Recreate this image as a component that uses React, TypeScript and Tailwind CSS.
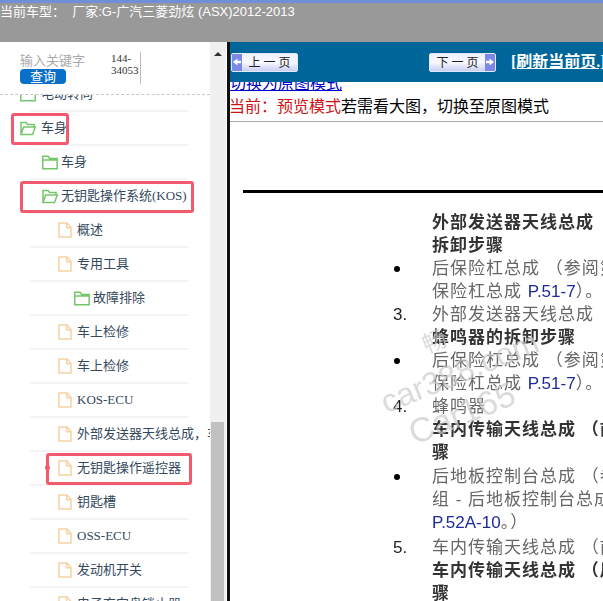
const cjk = "font-['Liberation_Sans','Noto_Sans_CJK_SC',sans-serif]";
const treeFont = "font-['Liberation_Serif','Noto_Sans_CJK_SC',serif]";

function FolderIcon({ open }: { open?: boolean }) {
  return (
    <svg width="16" height="15" viewBox="0 0 16 15" fill="none" stroke="#74c66c" strokeWidth="1.5" className="shrink-0">
      {open ? (
        <path d="M1 13.5V1.5h5l1.5 2H14v2.5M1 13.5h11.5L15.3 6H3.6L1 13.5z" />
      ) : (
        <path d="M.8 13.8V1.3h5.4l1.4 2.2h7.6v10.3H.8zM.8 5h14.4" />
      )}
    </svg>
  );
}

function FileIcon() {
  return (
    <svg width="14" height="16" viewBox="0 0 14 16" fill="none" stroke="#f5d2a4" strokeWidth="1.5" className="shrink-0">
      <path d="M1 1h8l4 4.5V15H1V1zM8.6 1v4.8H13" />
    </svg>
  );
}

type Node = {
  label: string;
  indent: string;
  gap: string;
  folder?: boolean;
  open?: boolean;
  mark?: string;
  dot?: boolean;
};

const nodes: Node[] = [
  { label: "电动转向", indent: "pl-[20px]", gap: "gap-[5px]", folder: true },
  { label: "车身", indent: "pl-[20px]", gap: "gap-[5px]", folder: true, open: true, mark: "left-[-19px] w-[58px]" },
  { label: "车身", indent: "pl-[42px]", gap: "gap-[3px]", folder: true },
  { label: "无钥匙操作系统(KOS)", indent: "pl-[42px]", gap: "gap-[3px]", folder: true, open: true, mark: "left-[-10px] w-[174px]" },
  { label: "概述", indent: "pl-[58px]", gap: "gap-[5px]" },
  { label: "专用工具", indent: "pl-[58px]", gap: "gap-[5px]" },
  { label: "故障排除", indent: "pl-[74px]", gap: "gap-[3px]", folder: true },
  { label: "车上检修", indent: "pl-[58px]", gap: "gap-[5px]" },
  { label: "车上检修", indent: "pl-[58px]", gap: "gap-[5px]" },
  { label: "KOS-ECU", indent: "pl-[58px]", gap: "gap-[5px]" },
  { label: "外部发送器天线总成，车内传输天线总成", indent: "pl-[58px]", gap: "gap-[5px]" },
  { label: "无钥匙操作遥控器", indent: "pl-[58px]", gap: "gap-[5px]", mark: "left-[16px] w-[146px]", dot: true },
  { label: "钥匙槽", indent: "pl-[58px]", gap: "gap-[5px]" },
  { label: "OSS-ECU", indent: "pl-[58px]", gap: "gap-[5px]" },
  { label: "发动机开关", indent: "pl-[58px]", gap: "gap-[5px]" },
  { label: "电子方向盘锁止器", indent: "pl-[58px]", gap: "gap-[5px]" },
];

function TreeRow({ node }: { node: Node }) {
  return (
    <li className="relative ml-[30px] h-[34px] w-[158px] border-b-2 border-[#f4f4f4]">
      <div className={`-ml-[30px] flex h-[32px] w-[210px] items-center overflow-hidden ${node.indent} ${node.gap}`}>
        {node.folder ? <FolderIcon open={node.open} /> : <FileIcon />}
        <span className={`whitespace-nowrap text-[13px] text-[#34495e] ${treeFont}`}>{node.label}</span>
      </div>
      {node.mark && (
        <div className={`absolute top-[1px] h-[32px] rounded-[3px] border-[3px] border-[#f25a6e] ${node.mark}`}>
          {node.dot && <span className="absolute left-[-4px] top-[9px] h-[5px] w-[5px] rounded-full bg-[#f25a6e]" />}
        </div>
      )}
    </li>
  );
}

function Sidebar() {
  return (
    <aside className="flex h-full w-[230px] shrink-0 border-r-[3px] border-[#111]">
      <div className="flex w-[210px] shrink-0 flex-col bg-white">
        <div className="flex h-[53px] shrink-0 border-b border-dashed border-[#c8c8c8] pl-[20px] pt-[10px]">
          <div className="w-[46px] shrink-0">
            <div className={`whitespace-nowrap text-[13px] leading-[17px] text-[#aaa] ${cjk}`}>输入关键字</div>
            <div className={`flex h-[15px] w-[46px] items-center justify-center rounded-[4px] bg-[#0a6fc9] text-[13px] text-white ${cjk}`}>
              查询
            </div>
          </div>
          <div className="ml-[45px] h-[32px] w-[30px] border-r border-[#bbb] font-['Liberation_Serif',serif] text-[11px] leading-[12px] text-[#333]">
            144-
            <br />
            34053
          </div>
        </div>
        <div className="min-h-0 flex-1 overflow-hidden">
          <ul className="-mt-[17px]">
            {nodes.map((node, i) => (
              <TreeRow key={i} node={node} />
            ))}
          </ul>
        </div>
      </div>
      <div className="flex w-[16px] flex-col bg-[#f0f0f0]">
        <div className="flex h-[16px] shrink-0 items-center justify-center">
          <span className="mt-[8px] h-0 w-0 border-x-[4px] border-b-[4px] border-x-transparent border-b-[#333]" />
        </div>
        <div className="ml-[1px] mr-[2px] mt-[364px] flex-1 bg-[#c1c1c1]" />
      </div>
    </aside>
  );
}

function PageButton({ label, next }: { label: string; next?: boolean }) {
  const arrow = (
    <span className="flex h-full w-[10px] shrink-0 items-center justify-center bg-[#7a88e6]">
      <svg width="8" height="8" viewBox="0 0 8 8" fill="#fff" className={next ? "" : "rotate-180"}>
        <path d="M0 2.8h3.6V.5L8 4 3.6 7.5V5.2H0z" />
      </svg>
    </span>
  );
  return (
    <button className="flex h-[19px] w-[67px] shrink-0 items-center overflow-hidden rounded-[2px] border border-[#e4e8fb] bg-gradient-to-b from-[#eef0ff] via-[#f8f8ff] to-[#c9cff3] text-[12px] tracking-[3px] text-[#222]">
      {!next && arrow}
      <span className="flex-1 pl-[3px] text-center font-['Noto_Sans_CJK_SC',sans-serif]">{label}</span>
      {next && arrow}
    </button>
  );
}

function Step({ no, dot, children, className = "" }: { no?: string; dot?: boolean; children: React.ReactNode; className?: string }) {
  return (
    <div className={`flex h-[23px] items-center whitespace-nowrap ${className}`}>
      <div className="w-[40px] shrink-0 pl-[1px] font-['Liberation_Sans',sans-serif] text-[17px] text-[#222]">
        {no}
        {dot && <span className="ml-[1px] block h-[6px] w-[6px] rounded-full bg-black" />}
      </div>
      {children}
    </div>
  );
}

const body = "font-['Liberation_Sans','Noto_Sans_CJK_SC',sans-serif] text-[17px] tracking-[1px] text-[#666]";
const heading = "font-['Liberation_Sans','Noto_Sans_CJK_SC',sans-serif] text-[17px] tracking-[1px] font-bold text-[#333]";
const ref = "tracking-normal text-[#1c2a9a]";

function Manual() {
  return (
    <div className="relative min-h-0 flex-1 overflow-hidden bg-white">
      <div className="h-[11px] overflow-hidden">
        <a className="-mt-[10px] block w-fit text-[16px] leading-[21px] text-[#0000cc] underline font-['Noto_Sans_CJK_SC',sans-serif]">
          切换为原图模式
        </a>
      </div>
      <p className="h-[29px] border-b border-[#aaa] text-[16px] leading-[24px] text-black font-['Noto_Sans_CJK_SC',sans-serif]">
        <span className="-ml-[1px] text-[#cc1414]">当前：预览模式</span>若需看大图，切换至原图模式
      </p>
      <div className="blur-[0.4px]">
        <div className="ml-[13px] mt-[68px] h-[3px] bg-black" />
        <div className="ml-[162px] mt-[18px]">
          <Step><span className={heading}>外部发送器天线总成</span></Step>
          <Step><span className={heading}>拆卸步骤</span></Step>
          <Step dot><span className={body}>后保险杠总成 （参阅第</span></Step>
          <Step><span className={body}>保险杠总成 <span className={ref}>P.51-7</span>）。</span></Step>
          <Step no="3."><span className={body}>外部发送器天线总成</span></Step>
          <Step><span className={heading}>蜂鸣器的拆卸步骤</span></Step>
          <Step dot><span className={body}>后保险杠总成 （参阅第</span></Step>
          <Step><span className={body}>保险杠总成 <span className={ref}>P.51-7</span>）。</span></Step>
          <Step no="4."><span className={body}>蜂鸣器</span></Step>
          <Step><span className={heading}>车内传输天线总成 （前</span></Step>
          <Step><span className={heading}>骤</span></Step>
          <Step dot className="mt-[1px]"><span className={body}>后地板控制台总成 （参</span></Step>
          <Step><span className={body}>组 - 后地板控制台总成</span></Step>
          <Step><span className={body}><span className={ref}>P.52A-10</span>。）</span></Step>
          <Step no="5." className="mt-[2px]"><span className={body}>车内传输天线总成 （前</span></Step>
          <Step><span className={heading}>车内传输天线总成 （后</span></Step>
          <Step><span className={heading}>骤</span></Step>
        </div>
      </div>
      {/* watermark sits over the scanned page */}
      <div className="pointer-events-none absolute left-[192px] top-[244px] -rotate-[22deg] text-[24px] leading-[28px] text-[#ccc] opacity-70 font-['Noto_Sans_CJK_SC',sans-serif]">
        畅
      </div>
      <div className="pointer-events-none absolute left-[146px] top-[272px] -rotate-[22deg] whitespace-nowrap text-[32px] leading-[36px] text-[#ccc] opacity-70 font-['Liberation_Sans',sans-serif]">
        car388.com
      </div>
      <div className="pointer-events-none absolute left-[176px] top-[313px] -rotate-[22deg] whitespace-nowrap text-[34px] leading-[36px] text-[#ccc] opacity-70 font-['Liberation_Sans',sans-serif]">
        Car165
      </div>
    </div>
  );
}

export default function App() {
  return (
    <div className="flex h-[601px] w-[603px] flex-col overflow-hidden bg-white">
      <header className="h-[42px] shrink-0 border-t-[3px] border-[#6f8fd8] bg-[#999999]">
        <div className={`whitespace-nowrap text-[13px] leading-[18px] text-white ${cjk}`}>
          当前车型：&nbsp;&nbsp;厂家:G-广汽三菱劲炫 (ASX)2012-2013
        </div>
      </header>
      <div className="flex min-h-0 flex-1">
        <Sidebar />
        <main className="flex min-w-0 flex-1 flex-col">
          <nav className="flex h-[40px] shrink-0 items-center whitespace-nowrap bg-[#006699] pl-[1px]">
            <PageButton label="上一页" />
            <div className="ml-[131px] flex shrink-0 items-center">
              <PageButton label="下一页" next />
              <span className="ml-[15px] font-['Liberation_Serif','Noto_Sans_CJK_SC',serif] text-[16px] font-bold text-white underline">
                [刷新当前页.]
              </span>
            </div>
          </nav>
          <Manual />
        </main>
      </div>
    </div>
  );
}
